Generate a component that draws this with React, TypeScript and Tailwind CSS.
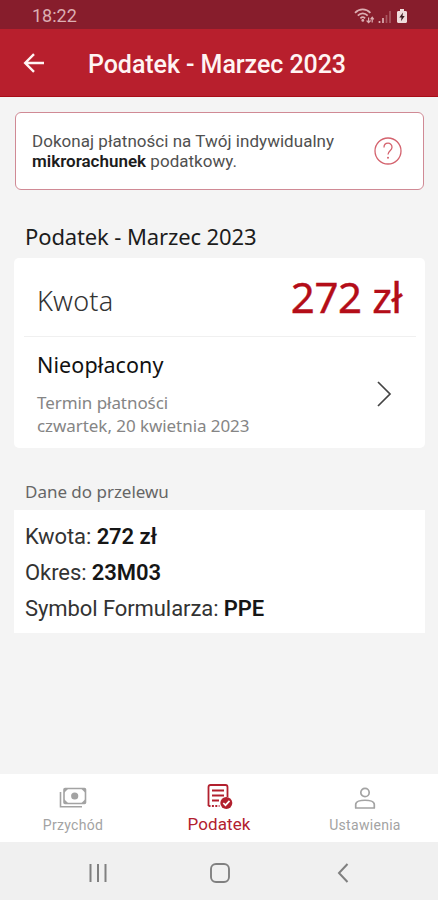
import type { ReactNode } from "react";
import clsx from "clsx";

type TabId = "income" | "tax" | "settings";

const TRANSFER_ROWS: { label: string; value: string }[] = [
  { label: "Kwota", value: "272 zł" },
  { label: "Okres", value: "23M03" },
  { label: "Symbol Formularza", value: "PPE" },
];

const TABS: { id: TabId; label: string; icon: ReactNode }[] = [
  { id: "income", label: "Przychód", icon: <BanknotesIcon /> },
  { id: "tax", label: "Podatek", icon: <TaxFormIcon /> },
  { id: "settings", label: "Ustawienia", icon: <PersonIcon /> },
];

export default function App() {
  return (
    <div className="flex h-[900px] w-[438px] flex-col overflow-hidden bg-[#f4f4f4] font-['Roboto',sans-serif] text-[#1c1c1c]">
      <StatusBar />
      <AppHeader title="Podatek - Marzec 2023" />
      <main className="flex-1 pt-[15px]">
        <MicroAccountNotice />
        <h2 className="mt-[31px] ml-[25px] font-['Noto_Sans',sans-serif] text-[22px] leading-[30px] tracking-[-0.12px]">
          Podatek - Marzec 2023
        </h2>
        <TaxCard />
        <h3 className="mt-[33px] ml-[25px] font-['Noto_Sans',sans-serif] text-[17px] leading-[22px] tracking-[-0.02px] text-[#666]">
          Dane do przelewu
        </h3>
        <TransferCard />
      </main>
      <TabBar active="tax" />
      <SystemNav />
    </div>
  );
}

function StatusBar() {
  return (
    <div className="flex h-[29px] shrink-0 items-center bg-[#871d2c] pt-[3px] pr-[30px] pl-8 text-[#dcaeb2]">
      <span className="flex-1 text-[18px] leading-none">18:22</span>
      <svg width="54" height="17" viewBox="0 0 54 17" fill="none" stroke="currentColor">
        <path d="M1 4.8C5.4.3 12 .3 16.4 4.8M3.8 7.6c2.9-3 7-3 9.9 0M6.4 10.3c1.4-1.4 3.3-1.4 4.7 0" strokeWidth="1.7" />
        <circle cx="8.8" cy="12.4" r="1.4" fill="currentColor" stroke="none" />
        <path d="M14.6 9.500v5m-2-2 2 2.200 2-2.200M18.200 14.500v-5m-1.600 1.800 1.600-2 1.600 2" strokeWidth="1.2" />
        <path d="M25.500 13v2M29 10v5" strokeWidth="1.7" />
        <path d="M32.500 7v8M36 3v12" strokeWidth="1.7" opacity=".4" />
        <path d="M46 1h4v2h2.200l.8.900V14l-.9 1H43.900l-.9-1V3.900l.8-.9H46z" fill="#efdcdc" stroke="none" />
        <path d="m49 4.500-3.700 5h2.200l-.5 3.700 3.700-5.100h-2.200z" fill="#3c1b20" stroke="none" />
      </svg>
    </div>
  );
}

function AppHeader({ title }: { title: string }) {
  return (
    <header className="flex h-[68px] shrink-0 items-center border-b border-[#a80d17] bg-[#b81f2d] pr-5 pl-[23px] text-[#fff4f3]">
      <button type="button" aria-label="Wstecz" className="flex">
        <svg width="22" height="20" viewBox="0 0 22 20" fill="none" stroke="currentColor" strokeWidth="2.4">
          <path d="M21 10H2.500M11 1.200 2.200 10l8.800 8.800" />
        </svg>
      </button>
      <h1 className="ml-[43px] pt-[5px] text-[25px] leading-7 font-medium tracking-[-0.06px] whitespace-nowrap">{title}</h1>
    </header>
  );
}

function MicroAccountNotice() {
  return (
    <div className="mr-3.5 ml-[15px] flex h-[78px] items-center rounded-md border border-[#d08a95] bg-white pr-[21px] pl-4">
      <p className="flex-1 text-[17px] leading-5 tracking-[0.03px] whitespace-nowrap text-[#505050]">
        Dokonaj płatności na Twój indywidualny
        <br />
        <b className="font-semibold tracking-normal text-[#1c1c1c]">mikrorachunek</b> podatkowy.
      </p>
      <svg width="28" height="28" viewBox="0 0 28 28" fill="none" stroke="#d4636e" strokeWidth="1.3">
        <circle cx="14" cy="14" r="13" />
        <path d="M10 10.500C10 4.800 18 4.800 18 10.200c0 3.400-4 3.600-4 7.300" />
        <circle cx="14" cy="20.8" r="1" fill="#d4636e" stroke="none" />
      </svg>
    </div>
  );
}

function TaxCard() {
  return (
    <section className="mt-[7px] mr-[13px] ml-3.5 h-[190px] rounded-[5px] bg-white font-['Noto_Sans',sans-serif]">
      <div className="mr-[9px] ml-2.5 flex h-[79px] items-center justify-between border-b border-[#f0f0f0] pr-[14px] pl-[13px]">
        <span className="pt-[7px] text-[27px] leading-9 font-light tracking-[0.2px] text-[#333]">Kwota</span>
        <span className="text-[42px] leading-[56px] tracking-[-0.4px] text-[#b40d18] [-webkit-text-stroke:0.4px_#b40d18]">
          272 zł
        </span>
      </div>
      <div className="flex items-center justify-between pt-[14px] pr-[33px] pl-[23px]">
        <div>
          <p className="text-[21.5px] leading-7 tracking-[0.1px] text-[#111]">Nieopłacony</p>
          <p className="mt-[12px] text-[17px] leading-[23px] tracking-[-0.06px] text-[#858585]">
            Termin płatności
            <br />
            czwartek, 20 kwietnia 2023
          </p>
        </div>
        <svg width="16" height="26" viewBox="0 0 16 26" fill="none" stroke="#444" strokeWidth="1.7">
          <path d="M2 1l12 12L2 25" />
        </svg>
      </div>
    </section>
  );
}

function TransferCard() {
  return (
    <section className="mt-[7px] mr-[13px] ml-3.5 h-[123px] bg-white pt-[9px] pl-[11px] text-[22px] leading-9 tracking-[-0.08px]">
      {TRANSFER_ROWS.map((row) => (
        <p key={row.label} className="h-9 whitespace-nowrap text-[#333]">
          {row.label}: <b className="font-semibold text-[#161616]">{row.value}</b>
        </p>
      ))}
    </section>
  );
}

function TabBar({ active }: { active: TabId }) {
  return (
    <nav className="grid h-[68px] shrink-0 grid-cols-3 bg-white">
      {TABS.map((tab) => (
        <button
          key={tab.id}
          type="button"
          className={clsx(
            "flex flex-col items-center pt-2",
            tab.id === active ? "text-[#b2202e]" : "text-[#a3a3a3]",
          )}
        >
          <span className="flex h-8 items-center">{tab.icon}</span>
          <span
            className={clsx(
              "whitespace-nowrap",
              tab.id === active
                ? "text-[17px] leading-5 tracking-[0.1px]"
                : "pt-px text-[14px] leading-5 tracking-[0.3px]",
            )}
          >
            {tab.label}
          </span>
        </button>
      ))}
    </nav>
  );
}

function BanknotesIcon() {
  return (
    <svg width="28" height="22" viewBox="0 0 28 22" fill="none" stroke="currentColor" strokeWidth="1.6">
      <rect x="5" y="1.5" width="21.5" height="15" rx="1" />
      <path d="M1.500 5v14.800h21.500" />
      <circle cx="15.7" cy="9" r="3.6" fill="currentColor" stroke="none" />
      <path d="M5 2h4L5 6zM26.500 2h-4l4 4zM5 16h4l-4-4zM26.500 16h-4l4-4z" fill="currentColor" stroke="none" />
    </svg>
  );
}

function TaxFormIcon() {
  return (
    <svg width="27" height="26" viewBox="0 0 27 26" fill="none" stroke="currentColor" strokeWidth="1.8" className="-mt-0.5">
      <path d="M2.500 22V3q0-2 2-2h15q2 0 2 2v10" />
      <path d="M6 6.500h12M6 11.500h12M6 16.500h7" strokeWidth="2" />
      <path d="M2.500 22h11" strokeDasharray="2 1.4" strokeWidth="2" />
      <circle cx="20.3" cy="19" r="6" fill="currentColor" stroke="none" />
      <path d="m17.300 19 2.200 2.200 4-4.300" stroke="#fff" strokeWidth="1.7" />
    </svg>
  );
}

function PersonIcon() {
  return (
    <svg width="22" height="24" viewBox="0 0 22 24" fill="none" stroke="currentColor" strokeWidth="1.7">
      <circle cx="11" cy="6.5" r="4.2" />
      <path d="M1.700 22v-3.500c0-5.700 18.600-5.700 18.600 0V22z" strokeLinejoin="round" />
    </svg>
  );
}

function SystemNav() {
  return (
    <div className="flex h-[58px] shrink-0 items-center bg-[#f0f0f0] pt-1 pl-[88px]">
      <svg width="20" height="20" viewBox="0 0 20 20" fill="none" stroke="#808080" strokeWidth="2">
        <path d="M2.500 1v18M10 1v18M17.500 1v18" />
      </svg>
      <svg width="20" height="20" viewBox="0 0 20 20" fill="none" stroke="#808080" strokeWidth="1.9" className="ml-[102px]">
        <rect x="1" y="1" width="18" height="18" rx="5" />
      </svg>
      <svg width="12" height="20" viewBox="0 0 12 20" fill="none" stroke="#808080" strokeWidth="2" className="ml-[107px]">
        <path d="M10.500 1 2 10l8.500 9" />
      </svg>
    </div>
  );
}
